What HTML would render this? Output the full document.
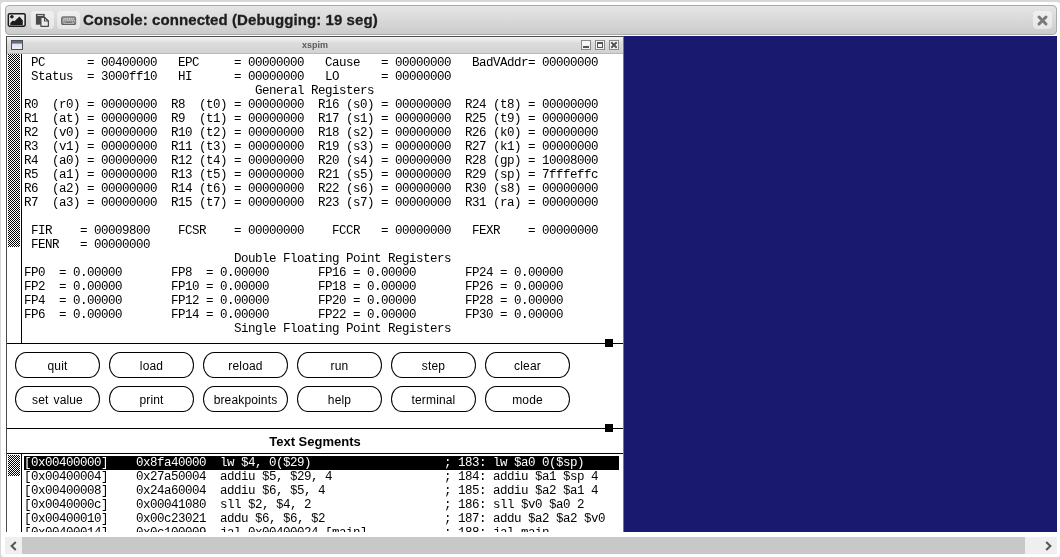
<!DOCTYPE html>
<html><head><meta charset="utf-8">
<style>
*{box-sizing:border-box}
html,body{margin:0;padding:0}
body{-webkit-font-smoothing:antialiased;width:1060px;height:557px;overflow:hidden;position:relative;background:#d8d8d8;font-family:"Liberation Sans",sans-serif}
.a{position:absolute}
#panel{left:1px;top:2px;width:1059px;height:555px;background:#fff;border-radius:3px}
#toolbar{left:5px;top:5px;width:1052px;height:30px;border:1px solid #a9a9a9;border-radius:4px;background:linear-gradient(#e6e6e6,#cbcbcb)}
.tbtn{top:11px;width:23px;height:18px;border-radius:4px;background:linear-gradient(#f0f0f0,#e6e6e6)}
#title{will-change:transform;transform:translateY(0.5px);left:83px;top:10px;font:bold 15px "Liberation Sans",sans-serif;color:#1e1e1e;white-space:pre;line-height:18px;letter-spacing:0.08px;-webkit-text-stroke:0.3px #1e1e1e}
#canvas{left:6px;top:36px;width:1051px;height:496px;background:#191970;overflow:hidden}
#win{left:0;top:0;width:618px;height:600px;background:#fff;border-left:1px solid #4a4a4a;border-top:1px solid #505050;border-right:1px solid #7a7a7a}
#wtitle{left:0;top:0;width:616px;height:17px;background:linear-gradient(#f4f4f4,#dcdcdc 40%,#d2d2d2);border-bottom:1px solid #b8b8b8}
.mono{will-change:transform;font-family:"Liberation Mono",monospace;font-size:12.5px;letter-spacing:-0.5px;white-space:pre;color:#000;line-height:14px}
.hl{background:#000;color:#fff}
.btn{will-change:transform;width:85px;height:26px;border:1px solid #000;border-radius:11px/13px;text-align:center;font:12px "Liberation Sans",sans-serif;letter-spacing:0.15px;word-spacing:1.5px;line-height:26px;color:#000;background:#fff}
.hline{height:1px;background:#000}
.sq{width:8px;height:8px;background:#000}
#hscroll{left:5px;top:537px;width:1052px;height:17px;background:#efefef}
#thumb{left:17px;top:0;width:1003px;height:17px;background:#c8c8c8}
</style></head><body>
<div class="a" id="panel"></div>
<div class="a" id="toolbar"></div>

<svg class="a" style="left:6px;top:10px" width="22" height="20" viewBox="0 0 22 20">
<rect x="2.45" y="3.9" width="16.6" height="12.15" rx="1.2" fill="#e4e4e4" stroke="#1c1c1c" stroke-width="1.7"/>
<rect x="3.6" y="5.0" width="14.3" height="9.9" fill="none" stroke="#f6f6f6" stroke-width="0.6"/>
<circle cx="5.9" cy="6.8" r="1.8" fill="#1c1c1c"/>
<path d="M4.3 15 L4.3 13.1 L6.8 10.4 L8.4 11.2 L13.5 6.5 L16.8 10.4 L16.8 15 Z" fill="#1c1c1c"/>
</svg>
<div class="a tbtn" style="left:31px"></div>
<div class="a tbtn" style="left:57px"></div>
<svg class="a" style="left:30px;top:10px" width="26" height="20" viewBox="0 0 26 20">
<rect x="5.9" y="3.9" width="8.8" height="10.8" fill="#4a4a4a"/>
<rect x="7.4" y="4.9" width="5.8" height="1.1" fill="#c4c4c4"/>
<path d="M10.9 7.5 H14.5 L18.4 11 V16.3 H10.9 Z" fill="#ebebeb" stroke="#4a4a4a" stroke-width="1.2" stroke-linejoin="round"/>
<path d="M14.5 7.5 V11 H18.2 Z" fill="#fafafa" stroke="#4a4a4a" stroke-width="1.1" stroke-linejoin="round"/>
</svg>
<svg class="a" style="left:56px;top:10px" width="26" height="20" viewBox="0 0 26 20">
<rect x="5.5" y="6.8" width="14.2" height="7.7" rx="1.3" fill="#8e8e8e" stroke="#6a6a6a" stroke-width="0.9"/>
<rect x="5.6" y="13.6" width="14" height="1.1" fill="#585858"/>
<path d="M7.6 8.9 H18.2" stroke="#f6f6f6" stroke-width="1.1" stroke-dasharray="1 0.8"/>
<path d="M7.2 10.7 H18.6" stroke="#f0f0f0" stroke-width="0.9" stroke-dasharray="0.9 0.9"/>
<path d="M9.2 12.4 H16" stroke="#505050" stroke-width="1"/>
<path d="M7.4 13.2 H17.8" stroke="#f2f2f2" stroke-width="0.7"/>
</svg>

<div class="a" id="title">Console: connected (Debugging: 19 seg)</div>
<div class="a" style="left:1033px;top:11px;width:19px;height:18px;border-radius:4px;background:linear-gradient(#f0f0f0,#e6e6e6)"></div>
<svg class="a" style="left:1036px;top:14px" width="13" height="13" viewBox="0 0 13 13">
<path d="M3 3 L10 10 M10 3 L3 10" stroke="#7a7a7a" stroke-width="3" stroke-linecap="round"/>
</svg>

<div class="a" id="canvas">
<div class="a" id="win">
<div class="a" id="wtitle"></div>
<svg class="a" style="left:4px;top:3px" width="12" height="10" viewBox="0 0 12 10">
<defs><linearGradient id="wg" x1="0" y1="0" x2="0" y2="1"><stop offset="0" stop-color="#d6dbe9"/><stop offset="1" stop-color="#f2eef6"/></linearGradient></defs>
<rect x="0.5" y="0.5" width="11" height="9" fill="url(#wg)" stroke="#505050" stroke-width="1"/>
<rect x="1" y="1" width="10" height="2.6" fill="#5d6f8e"/>
</svg>
<div class="a" style="left:295px;top:2px;will-change:transform;font:bold 9px 'Liberation Sans',sans-serif;color:#5a5a5a;line-height:12px">xspim</div>

<div class="a" style="left:574px;top:3px;width:10px;height:10px;border:1px solid #8a8a8a;background:#f6f6f6"></div>
<div class="a" style="left:588px;top:3px;width:10px;height:10px;border:1px solid #8a8a8a;background:#f6f6f6"></div>
<div class="a" style="left:602px;top:3px;width:10px;height:10px;border:1px solid #8a8a8a;background:#f6f6f6"></div>
<div class="a" style="left:576px;top:9px;width:6px;height:2px;background:#555"></div>
<div class="a" style="left:590px;top:5px;width:6px;height:6px;border:1px solid #555;border-top-width:2px"></div>
<svg class="a" style="left:603px;top:4px" width="8" height="8" viewBox="0 0 8 8"><path d="M1.3 1.3 L6.7 6.7 M6.7 1.3 L1.3 6.7" stroke="#555" stroke-width="2"/></svg>

<svg class="a" style="left:1px;top:17px" width="12" height="193" shape-rendering="crispEdges"><defs><pattern id="p1_17" width="2" height="2" patternUnits="userSpaceOnUse"><rect width="2" height="2" fill="#fff"/><rect width="1" height="1" fill="#000"/><rect x="1" y="1" width="1" height="1" fill="#000"/></pattern></defs><rect width="12" height="193" fill="url(#p1_17)"/></svg>
<div class="a" style="left:14px;top:17px;width:1px;height:289px;background:#000"></div>
<div class="a mono" style="left:17px;top:19px"> PC      = 00400000   EPC     = 00000000   Cause   = 00000000   BadVAddr= 00000000
 Status  = 3000ff10   HI      = 00000000   LO      = 00000000
                                 General Registers
R0  (r0) = 00000000  R8  (t0) = 00000000  R16 (s0) = 00000000  R24 (t8) = 00000000
R1  (at) = 00000000  R9  (t1) = 00000000  R17 (s1) = 00000000  R25 (t9) = 00000000
R2  (v0) = 00000000  R10 (t2) = 00000000  R18 (s2) = 00000000  R26 (k0) = 00000000
R3  (v1) = 00000000  R11 (t3) = 00000000  R19 (s3) = 00000000  R27 (k1) = 00000000
R4  (a0) = 00000000  R12 (t4) = 00000000  R20 (s4) = 00000000  R28 (gp) = 10008000
R5  (a1) = 00000000  R13 (t5) = 00000000  R21 (s5) = 00000000  R29 (sp) = 7fffeffc
R6  (a2) = 00000000  R14 (t6) = 00000000  R22 (s6) = 00000000  R30 (s8) = 00000000
R7  (a3) = 00000000  R15 (t7) = 00000000  R23 (s7) = 00000000  R31 (ra) = 00000000

 FIR    = 00009800    FCSR    = 00000000    FCCR   = 00000000   FEXR    = 00000000
 FENR   = 00000000
                              Double Floating Point Registers
FP0  = 0.00000       FP8  = 0.00000       FP16 = 0.00000       FP24 = 0.00000
FP2  = 0.00000       FP10 = 0.00000       FP18 = 0.00000       FP26 = 0.00000
FP4  = 0.00000       FP12 = 0.00000       FP20 = 0.00000       FP28 = 0.00000
FP6  = 0.00000       FP14 = 0.00000       FP22 = 0.00000       FP30 = 0.00000
                              Single Floating Point Registers</div>
<div class="a hline" style="left:0px;top:306px;width:616px"></div>
<div class="a sq" style="left:598px;top:302px"></div>
<div class="a btn" style="left:8px;top:315px">quit</div>
<div class="a btn" style="left:102px;top:315px">load</div>
<div class="a btn" style="left:196px;top:315px">reload</div>
<div class="a btn" style="left:290px;top:315px">run</div>
<div class="a btn" style="left:384px;top:315px">step</div>
<div class="a btn" style="left:478px;top:315px">clear</div>
<div class="a btn" style="left:8px;top:349px">set value</div>
<div class="a btn" style="left:102px;top:349px">print</div>
<div class="a btn" style="left:196px;top:349px">breakpoints</div>
<div class="a btn" style="left:290px;top:349px">help</div>
<div class="a btn" style="left:384px;top:349px">terminal</div>
<div class="a btn" style="left:478px;top:349px">mode</div>
<div class="a hline" style="left:0px;top:391px;width:616px"></div>
<div class="a sq" style="left:598px;top:387px"></div>
<div class="a" style="left:0px;top:396px;width:616px;will-change:transform;text-align:center;font:bold 13px 'Liberation Sans',sans-serif;line-height:18px">Text Segments</div>
<div class="a hline" style="left:0px;top:416px;width:616px"></div>
<svg class="a" style="left:1px;top:418px" width="12" height="21" shape-rendering="crispEdges"><defs><pattern id="p1_418" width="2" height="2" patternUnits="userSpaceOnUse"><rect width="2" height="2" fill="#fff"/><rect width="1" height="1" fill="#000"/><rect x="1" y="1" width="1" height="1" fill="#000"/></pattern></defs><rect width="12" height="21" fill="url(#p1_418)"/></svg>
<div class="a" style="left:14px;top:416px;width:1px;height:100px;background:#000"></div>
<div class="a" style="left:17px;top:419px;width:595px;height:14px;background:#000"></div>
<div class="a mono" style="left:17px;top:419px"><span style="color:#fff">[0x00400000]    0x8fa40000  lw $4, 0($29)                   ; 183: lw $a0 0($sp)</span>
[0x00400004]    0x27a50004  addiu $5, $29, 4                ; 184: addiu $a1 $sp 4
[0x00400008]    0x24a60004  addiu $6, $5, 4                 ; 185: addiu $a2 $a1 4
[0x0040000c]    0x00041080  sll $2, $4, 2                   ; 186: sll $v0 $a0 2
[0x00400010]    0x00c23021  addu $6, $6, $2                 ; 187: addu $a2 $a2 $v0
[0x00400014]    0x0c100009  jal 0x00400024 [main]           ; 188: jal main</div>
</div>
</div>
<div class="a" id="hscroll"><div class="a" id="thumb"></div>
<svg class="a" style="left:4px;top:4px" width="9" height="10" viewBox="0 0 9 10"><path d="M6.8 1 L2.6 5 L6.8 9" fill="none" stroke="#555" stroke-width="2"/></svg>
<svg class="a" style="left:1039px;top:4px" width="9" height="10" viewBox="0 0 9 10"><path d="M2.2 1 L6.4 5 L2.2 9" fill="none" stroke="#555" stroke-width="2"/></svg>
</div>
</body></html>
